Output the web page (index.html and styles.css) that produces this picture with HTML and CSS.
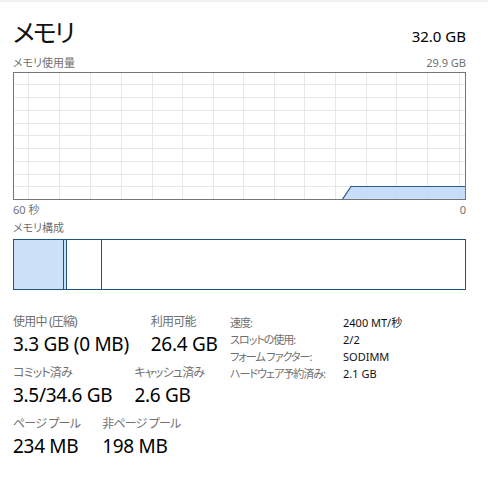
FILE: index.html
```html
<!DOCTYPE html>
<html lang="ja">
<head>
    <meta charset="UTF-8">
    <title>メモリ</title>
    <link rel="stylesheet" href="styles.css">
</head>
<body>
    <div class="panel">
        <div class="header">
            <h1 class="title">メモリ</h1>
            <span class="total">32.0 GB</span>
        </div>

        <div class="caption-row usage-caption">
            <span>メモリ使用量</span>
            <span>29.9 GB</span>
        </div>
        <div class="graph">
            <svg width="451" height="126" viewBox="0 0 451 126">
                <g class="grid">
                    <line x1="14.5" y1="0" x2="14.5" y2="126"/>
                    <line x1="45.5" y1="0" x2="45.5" y2="126"/>
                    <line x1="76.5" y1="0" x2="76.5" y2="126"/>
                    <line x1="107.5" y1="0" x2="107.5" y2="126"/>
                    <line x1="138.5" y1="0" x2="138.5" y2="126"/>
                    <line x1="168.5" y1="0" x2="168.5" y2="126"/>
                    <line x1="199.5" y1="0" x2="199.5" y2="126"/>
                    <line x1="229.5" y1="0" x2="229.5" y2="126"/>
                    <line x1="260.5" y1="0" x2="260.5" y2="126"/>
                    <line x1="290.5" y1="0" x2="290.5" y2="126"/>
                    <line x1="321.5" y1="0" x2="321.5" y2="126"/>
                    <line x1="352.5" y1="0" x2="352.5" y2="126"/>
                    <line x1="382.5" y1="0" x2="382.5" y2="126"/>
                    <line x1="413.5" y1="0" x2="413.5" y2="126"/>
                    <line x1="445.5" y1="0" x2="445.5" y2="126"/>
                    <line x1="0" y1="11.5" x2="451" y2="11.5"/>
                    <line x1="0" y1="24.5" x2="451" y2="24.5"/>
                    <line x1="0" y1="37.5" x2="451" y2="37.5"/>
                    <line x1="0" y1="50.5" x2="451" y2="50.5"/>
                    <line x1="0" y1="62.5" x2="451" y2="62.5"/>
                    <line x1="0" y1="75.5" x2="451" y2="75.5"/>
                    <line x1="0" y1="88.5" x2="451" y2="88.5"/>
                    <line x1="0" y1="101.5" x2="451" y2="101.5"/>
                    <line x1="0" y1="113.5" x2="451" y2="113.5"/>
                </g>
                <polygon class="usage-fill" points="328,126 337,113 451,113 451,126"/>
                <polyline class="usage-line" points="328,127 337,113.5 451,113.5"/>
            </svg>
        </div>
        <div class="caption-row axis">
            <span>60 秒</span>
            <span>0</span>
        </div>

        <div class="caption-row">
            <span>メモリ構成</span>
        </div>
        <div class="composition">
            <div class="seg in-use"></div>
            <div class="seg modified"></div>
            <div class="seg standby"></div>
            <div class="seg free"></div>
        </div>

        <div class="details">
            <div class="stats">
                <div class="stat-row">
                    <div class="stat">
                        <div class="stat-label">使用中 (圧縮)</div>
                        <div class="stat-value">3.3 GB (0 MB)</div>
                    </div>
                    <div class="stat">
                        <div class="stat-label">利用可能</div>
                        <div class="stat-value">26.4 GB</div>
                    </div>
                </div>
                <div class="stat-row">
                    <div class="stat">
                        <div class="stat-label">コミット済み</div>
                        <div class="stat-value">3.5/34.6 GB</div>
                    </div>
                    <div class="stat">
                        <div class="stat-label">キャッシュ済み</div>
                        <div class="stat-value">2.6 GB</div>
                    </div>
                </div>
                <div class="stat-row">
                    <div class="stat">
                        <div class="stat-label">ページ プール</div>
                        <div class="stat-value">234 MB</div>
                    </div>
                    <div class="stat">
                        <div class="stat-label">非ページ プール</div>
                        <div class="stat-value">198 MB</div>
                    </div>
                </div>
            </div>

            <div class="specs">
                <span class="spec-label">速度:</span>
                <span class="spec-value">2400 MT/秒</span>
                <span class="spec-label">スロットの使用:</span>
                <span class="spec-value">2/2</span>
                <span class="spec-label">フォーム ファクター:</span>
                <span class="spec-value">SODIMM</span>
                <span class="spec-label">ハードウェア予約済み:</span>
                <span class="spec-value">2.1 GB</span>
            </div>
        </div>
    </div>
</body>
</html>
```

FILE: styles.css
```css
body {
    margin: 0;
    background: #fff;
    border-top: 2px solid #f0f0f0;
    font-family: "Noto Sans", "Noto Sans CJK JP", sans-serif;
    font-feature-settings: "palt";
    color: #000;
}
.panel {
    padding: 14px 22px 0 13px;
}
.header {
    display: flex;
    justify-content: space-between;
    align-items: baseline;
    height: 32px;
}
.title {
    margin: 0;
    font-size: 25px;
    font-weight: 400;
    line-height: 32px;
    letter-spacing: -2px;
    color: #111;
}
.total {
    font-size: 15px;
}
.caption-row {
    display: flex;
    justify-content: space-between;
    font-size: 11px;
    line-height: 14px;
    color: #707070;
    margin-top: 4px;
}
.caption-row.usage-caption {
    margin-top: 8px;
}
.caption-row.axis {
    margin-top: 3px;
}
.graph {
    margin-top: 2px;
    border: 1px solid #767676;
    height: 126px;
}
.graph svg {
    display: block;
}
.grid line {
    stroke: #e8e8e8;
    stroke-width: 1;
}
.usage-fill {
    fill: rgba(190, 215, 247, 0.85);
}
.usage-line {
    fill: none;
    stroke: #2d5f8b;
    stroke-width: 1.2;
}
.composition {
    margin-top: 4px;
    height: 49px;
    border: 1px solid #1f5381;
    display: flex;
}
.seg {
    border-right: 1px solid #1f5381;
}
.seg.in-use {
    width: 49px;
    background: #cce0f8;
}
.seg.modified {
    width: 2px;
    background: #cce0f8;
}
.seg.standby {
    width: 34px;
}
.seg.free {
    flex: 1;
    border-right: none;
}
.details {
    display: flex;
    margin-top: 23px;
}
.stats {
    width: 217px;
    display: flex;
    flex-direction: column;
    gap: 7px;
}
.stat-row {
    display: flex;
    gap: 22px;
}
.stat-label {
    font-size: 12px;
    line-height: 18px;
    letter-spacing: -0.8px;
    color: #707070;
    white-space: nowrap;
}
.stat-value {
    font-size: 19px;
    line-height: 26px;
    letter-spacing: -0.3px;
    white-space: nowrap;
}
.specs {
    display: grid;
    grid-template-columns: 113px auto;
    font-size: 11px;
    line-height: 17px;
    padding-top: 1px;
    align-content: start;
}
.spec-label {
    color: #707070;
    letter-spacing: -1px;
    white-space: nowrap;
}
.spec-value {
    color: #111;
    white-space: nowrap;
}
```
